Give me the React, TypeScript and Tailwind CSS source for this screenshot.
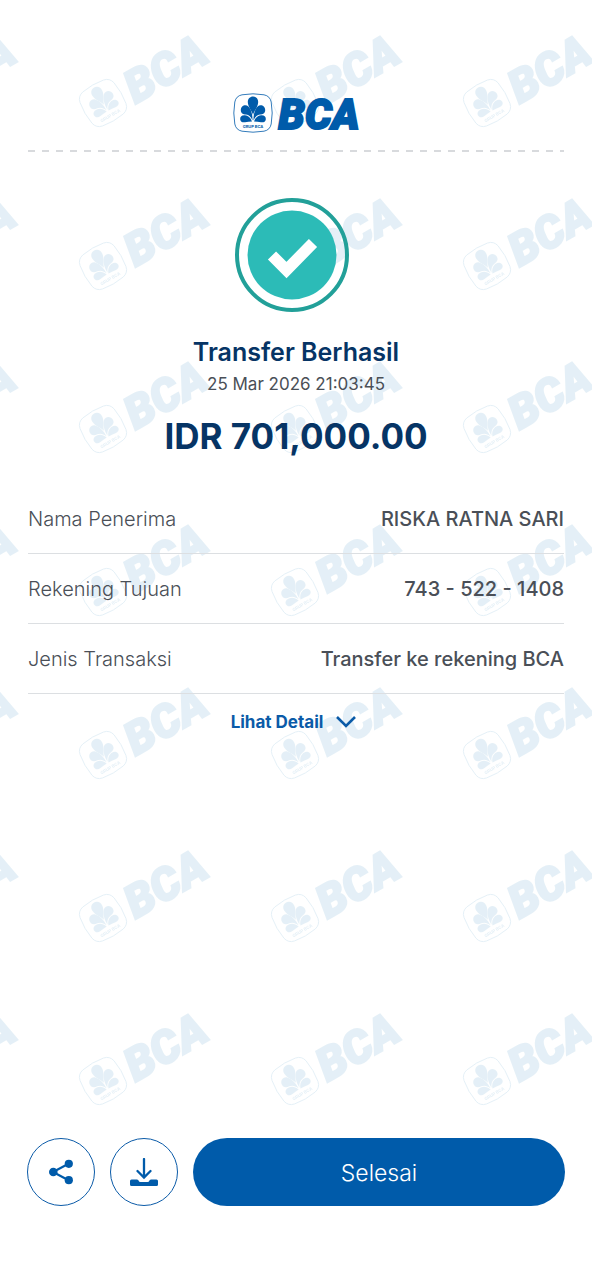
import React from "react";

function LogoMark() {
  return (
    <g>
      <path
        d="M-11 -18.200 Q0 -20.200 11 -18.200 Q17 -17 18.200 -11 Q20.200 0 18.200 11 Q17 17 11 18.200 Q0 20.200 -11 18.200 Q-17 17 -18.200 11 Q-20.200 0 -18.200 -11 Q-17 -17 -11 -18.200Z"
        fill="none"
        stroke="currentColor"
        strokeWidth="0.8"
      />
      <g fill="currentColor">
        <path d="M0 2 C-0.800 -2 -5.200 -6 -5.200 -11 C-5.200 -14.200 -3 -16.500 0 -16.500 C3 -16.500 5.200 -14.200 5.200 -11 C5.200 -6 0.800 -2 0 2Z" />
        <path d="M-0.500 7.500 C-0.400 2 -1.400 -3 -4.600 -6.400 C-7.600 -9.200 -12.200 -7 -12.200 -3 C-12.200 0.400 -9.800 1.400 -7 1.600 C-4 1.900 -2 4 -0.500 7.500Z" />
        <path d="M0.500 7.500 C0.400 2 1.400 -3 4.600 -6.400 C7.600 -9.200 12.200 -7 12.200 -3 C12.200 0.400 9.800 1.400 7 1.600 C4 1.900 2 4 0.500 7.500Z" />
        <path d="M-1 8.500 C-2.500 4.400 -5 2.600 -8 2.300 C-11.400 2 -13.200 4 -12.800 6.400 C-12.500 8.600 -10.500 9.600 -8 9.200 C-5.600 8.800 -3.500 8.600 -1 8.500Z" />
        <path d="M1 8.500 C2.500 4.400 5 2.600 8 2.300 C11.400 2 13.200 4 12.800 6.400 C12.500 8.600 10.500 9.600 8 9.200 C5.600 8.800 3.500 8.600 1 8.500Z" />
        <text x="0" y="15" textAnchor="middle" fontFamily="Inter, sans-serif" fontWeight="700" fontSize="4">
          GRUP BCA
        </text>
      </g>
      <text
        x="66"
        y="16"
        textAnchor="middle"
        fill="currentColor"
        stroke="currentColor"
        strokeWidth="2"
        fontFamily="Roboto, sans-serif"
        fontWeight="900"
        fontStyle="italic"
        fontSize="42"
      >
        BCA
      </text>
    </g>
  );
}

function Watermark() {
  return (
    <svg aria-hidden="true" className="pointer-events-none absolute inset-0 h-full w-full text-[#0070b4] opacity-10">
      <defs>
        <pattern id="marks" x="60" y="8" width="192" height="163" patternUnits="userSpaceOnUse">
          <g transform="translate(43 95) rotate(-30) scale(1.08)">
            <LogoMark />
          </g>
        </pattern>
      </defs>
      <rect width="100%" height="100%" fill="url(#marks)" />
    </svg>
  );
}

const details = [
  { label: "Nama Penerima", value: "RISKA RATNA SARI" },
  { label: "Rekening Tujuan", value: "743 - 522 - 1408" },
  { label: "Jenis Transaksi", value: "Transfer ke rekening BCA" },
];

export default function App() {
  return (
    <div className="flex min-h-screen flex-col bg-white font-['Inter',sans-serif] text-[#4a4f57]">
      <main className="relative flex grow flex-col px-7 pt-[93px]">
        <Watermark />
        <header className="relative flex flex-col items-center">
          <svg role="img" aria-label="BCA" viewBox="-37 -24 160 48" className="-my-1 h-12 w-40 text-[#005baa]">
            <LogoMark />
          </svg>
          <svg aria-hidden="true" className="mt-4 h-1 w-full">
            <line x1="0" y1="2" x2="100%" y2="2" stroke="#d8dadd" strokeWidth="2" strokeDasharray="7 7" />
          </svg>
        </header>

        <section className="relative flex flex-col items-center pt-[45px]">
          <svg aria-hidden="true" viewBox="0 0 114 114" className="mr-2 size-[114px]">
            <circle cx="57" cy="57" r="55" fill="none" stroke="#22a099" strokeWidth="4" />
            <circle cx="57" cy="57" r="44.500" fill="#28bab6" fillOpacity="0.98" />
            <path d="M37 57.500 L51.500 72 L78 45" fill="none" stroke="#fff" strokeWidth="11.500" />
          </svg>
          <h1 className="mt-6 text-[25px] leading-8 font-semibold text-[#063465]">Transfer Berhasil</h1>
          <time className="text-[17px] leading-8">25 Mar 2026 21:03:45</time>
          <p className="mt-4 text-[35px] leading-10 font-bold text-[#063465]">IDR 701,000.00</p>
        </section>

        <dl className="relative mt-7">
          {details.map((item) => (
            <div key={item.label} className="flex h-[70px] items-center justify-between border-b border-[#dcdfe2] text-[20px]">
              <dt className="font-light">{item.label}</dt>
              <dd className="font-medium">{item.value}</dd>
            </div>
          ))}
        </dl>

        <button type="button" className="relative mt-3 flex items-center gap-3 self-center pr-1 text-[17px] leading-8 font-bold text-[#0b5ba8]">
          Lihat Detail
          <svg aria-hidden="true" viewBox="0 0 22 14" className="h-[14px] w-[22px]">
            <path d="M2 2 L11 11 L20 2" fill="none" stroke="currentColor" strokeWidth="2.600" />
          </svg>
        </button>
      </main>

      <footer className="relative flex gap-[15px] bg-white px-[27px] pt-7 pb-[74px]">
        <button
          type="button"
          aria-label="Bagikan"
          className="flex size-[68px] shrink-0 items-center justify-center rounded-full border border-[#0b5ba8] bg-white text-[#005baa]"
        >
          <svg aria-hidden="true" viewBox="0 0 24 26" className="h-[26px] w-6">
            <path d="M20 4.500 L4 13 L20 21.500" fill="none" stroke="currentColor" strokeWidth="2.200" />
            <g fill="currentColor">
              <circle cx="19.800" cy="4.800" r="4.100" />
              <circle cx="4.300" cy="13" r="4.300" />
              <circle cx="19.800" cy="21.200" r="4.100" />
            </g>
          </svg>
        </button>
        <button
          type="button"
          aria-label="Unduh"
          className="flex size-[68px] shrink-0 items-center justify-center rounded-full border border-[#0b5ba8] bg-white text-[#005baa]"
        >
          <svg aria-hidden="true" viewBox="0 0 28 28" className="size-7">
            <path d="M14 1 V19 M7.500 13 L14 19.500 L20.500 13" fill="none" stroke="currentColor" strokeWidth="2.300" strokeLinecap="round" />
            <path
              d="M1.500 21.500 H7 Q8.500 21.500 8.800 23 Q9 24 10.500 24 H17.500 Q19 24 19.200 23 Q19.500 21.500 21 21.500 H26.500 Q28 21.500 28 23 V26.500 Q28 28 26.500 28 H1.500 Q0 28 0 26.500 V23 Q0 21.500 1.500 21.500Z"
              fill="currentColor"
            />
          </svg>
        </button>
        <button type="button" className="h-[68px] grow rounded-full bg-[#005baa] pt-0.5 text-[23px] font-light text-white">
          Selesai
        </button>
      </footer>
    </div>
  );
}
